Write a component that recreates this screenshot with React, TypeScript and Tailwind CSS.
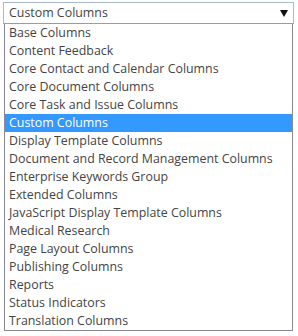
import React from 'react';

const groups = [
  'Base Columns',
  'Content Feedback',
  'Core Contact and Calendar Columns',
  'Core Document Columns',
  'Core Task and Issue Columns',
  'Custom Columns',
  'Display Template Columns',
  'Document and Record Management Columns',
  'Enterprise Keywords Group',
  'Extended Columns',
  'JavaScript Display Template Columns',
  'Medical Research',
  'Page Layout Columns',
  'Publishing Columns',
  'Reports',
  'Status Indicators',
  'Translation Columns',
];

export default function App() {
  const selected = 'Custom Columns';
  return (
    <div
      className="w-[298px] h-[336px] bg-white pt-[2px] pl-[3px] text-[12.4px] text-[#444]"
      style={{ fontFamily: '"Open Sans", "Noto Sans", sans-serif' }}
    >
      <div className="w-[291px] h-[22px] border border-[#a9b9d0] border-b-[#7da2ce] flex items-center justify-between pl-[5px] pr-[5px] bg-white">
        <span className="leading-none pt-[1px]">{selected}</span>
        <svg width="8" height="7" viewBox="0 0 8 7">
          <path d="M0 0 H8 L4 7 Z" fill="#111" />
        </svg>
      </div>
      <div className="ml-[1px] w-[289px] border border-t-0 border-[#8a8a96]">
        {groups.map((g) => (
          <div
            key={g}
            className={`h-[18px] pl-[4px] pt-[1px] flex items-center leading-none ${
              g === selected ? 'bg-[#3399ff] text-white' : ''
            }`}
          >
            {g}
          </div>
        ))}
      </div>
    </div>
  );
}
